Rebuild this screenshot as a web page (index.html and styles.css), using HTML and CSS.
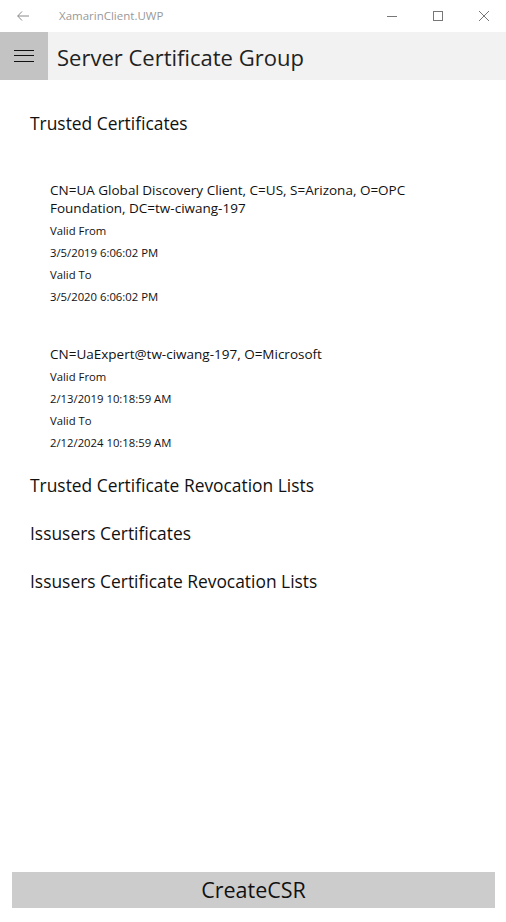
FILE: index.html
```html
<!DOCTYPE html>
<html>
<head>
<meta charset="utf-8">
<link rel="stylesheet" href="styles.css">
</head>
<body>
<div class="window">
  <div class="titlebar">
    <div class="tb-back">
      <svg width="12" height="10" viewBox="0 0 12 10"><path d="M5 0.5 L0.7 5 L5 9.5 M0.7 5 H12" fill="none" stroke="#8a8a8a" stroke-width="1"/></svg>
    </div>
    <div class="tb-title">XamarinClient.UWP</div>
    <div class="tb-controls">
      <div class="tb-btn"><svg width="10" height="10" viewBox="0 0 10 10"><path d="M0 5.5 H10" stroke="#777" stroke-width="1"/></svg></div>
      <div class="tb-btn"><svg width="10" height="10" viewBox="0 0 10 10"><rect x="0.5" y="0.5" width="9" height="9" fill="none" stroke="#777" stroke-width="1"/></svg></div>
      <div class="tb-btn"><svg width="10" height="10" viewBox="0 0 10 10"><path d="M0 0 L10 10 M10 0 L0 10" stroke="#777" stroke-width="1"/></svg></div>
    </div>
  </div>
  <div class="header">
    <div class="menu-btn">
      <svg width="20" height="12" viewBox="0 0 20 12"><path d="M0 0.5 H20 M0 5.5 H20 M0 11.5 H20" stroke="#111" stroke-width="1"/></svg>
    </div>
    <div class="header-title">Server Certificate Group</div>
  </div>
  <div class="content">
    <div class="group-title first">Trusted Certificates</div>
    <div class="cert-list">
      <div class="cert">
        <div class="cert-name">CN=UA Global Discovery Client, C=US, S=Arizona, O=OPC Foundation, DC=tw-ciwang-197</div>
        <div class="cert-line">Valid From</div>
        <div class="cert-line">3/5/2019 6:06:02 PM</div>
        <div class="cert-line">Valid To</div>
        <div class="cert-line">3/5/2020 6:06:02 PM</div>
      </div>
      <div class="cert">
        <div class="cert-name">CN=UaExpert@tw-ciwang-197, O=Microsoft</div>
        <div class="cert-line">Valid From</div>
        <div class="cert-line">2/13/2019 10:18:59 AM</div>
        <div class="cert-line">Valid To</div>
        <div class="cert-line">2/12/2024 10:18:59 AM</div>
      </div>
    </div>
    <div class="group-title">Trusted Certificate Revocation Lists</div>
    <div class="group-title">Issusers Certificates</div>
    <div class="group-title">Issusers Certificate Revocation Lists</div>
  </div>
  <div class="footer">
    <div class="csr-btn">CreateCSR</div>
  </div>
</div>
</body>
</html>
```
FILE: styles.css
```css
html, body {
  margin: 0;
  padding: 0;
  background: #fff;
}
body {
  font-family: "Open Sans", "Noto Sans", sans-serif;
  color: #000;
}
.window {
  width: 506px;
  height: 922px;
  display: flex;
  flex-direction: column;
}
.titlebar {
  height: 32px;
  display: flex;
  align-items: center;
  background: #fff;
}
.tb-back {
  width: 48px;
  height: 32px;
  display: flex;
  align-items: center;
  justify-content: center;
  margin-left: -1px;
}
.tb-title {
  margin-left: 12px;
  font-size: 11.5px;
  color: #999;
  flex: 1;
  padding-bottom: 2px;
}
.tb-controls {
  display: flex;
  margin-right: -1px;
}
.tb-btn {
  width: 46px;
  height: 32px;
  display: flex;
  align-items: center;
  justify-content: center;
}
.header {
  height: 48px;
  background: #f2f2f2;
  display: flex;
  align-items: center;
}
.menu-btn {
  width: 48px;
  height: 48px;
  background: #c3c3c3;
  display: flex;
  align-items: center;
  justify-content: center;
}
.header-title {
  margin-left: 9px;
  font-size: 22px;
  color: #222;
  padding-top: 2px;
}
.content {
  flex: 1;
  padding: 0 30px;
}
.group-title {
  font-size: 17.4px;
  color: #111;
  height: 48px;
  line-height: 48px;
}
.group-title.first {
  margin-top: 19px;
}
.cert-list {
  padding: 34px 0 7px 20px;
}
.cert {
  padding-bottom: 37px;
}
.cert-list .cert:last-child {
  padding-bottom: 0;
}
.cert-name {
  font-size: 13.5px;
  line-height: 18px;
  color: #111;
  padding-right: 50px;
  margin-bottom: 3px;
}
.cert-line {
  font-size: 11.3px;
  line-height: 22px;
  color: #111;
}
.footer {
  padding: 0 11px 14px 12px;
}
.csr-btn {
  height: 36px;
  background: #cccccc;
  display: flex;
  align-items: center;
  justify-content: center;
  font-size: 21.5px;
  color: #111;
  padding-bottom: 1px;
  box-sizing: border-box;
}
```
